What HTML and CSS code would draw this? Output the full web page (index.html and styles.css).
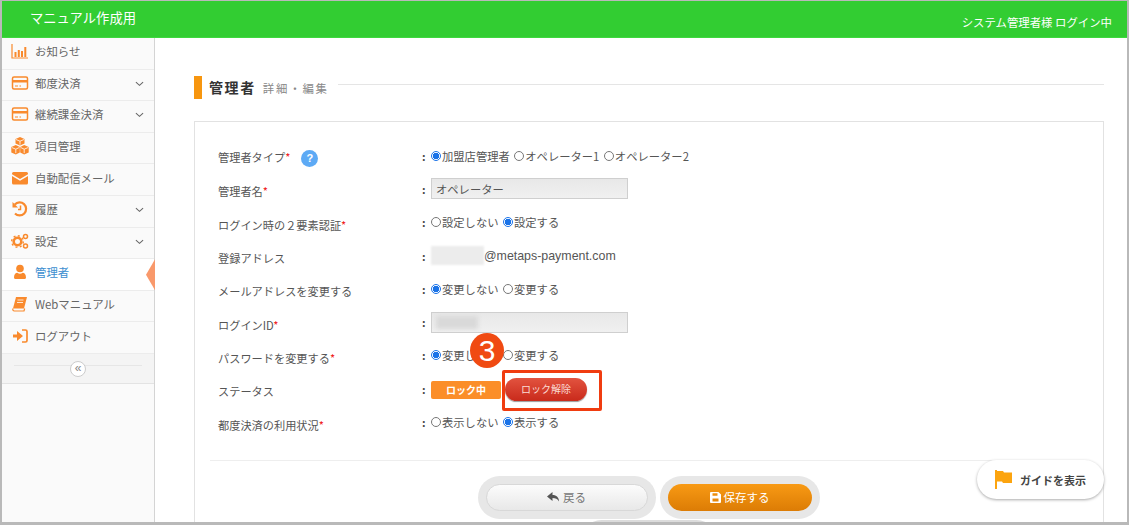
FILE: index.html
```html
<!DOCTYPE html>
<html lang="ja">
<head>
    <meta charset="UTF-8">
    <meta name="viewport" content="width=device-width, initial-scale=1.0">
    <title>管理者 詳細・編集</title>
    <link rel="stylesheet" href="styles.css">
</head>
<body>
<div class="frame">
    <header class="topbar">
        <div class="brand">マニュアル作成用</div>
        <div class="login-user">システム管理者様 ログイン中</div>
    </header>
    <div class="wrap">
        <nav class="sidebar">
            <a class="nav-item">
                <svg class="nav-icon" viewBox="0 0 18 18"><path d="M1 2v14h16" fill="none" stroke="#f98a2d" stroke-width="1.2"/><path d="M3.500 10h2v5h-2zM6.800 8h2v7h-2zM10 9h2v6h-2zM13.300 5h2v10h-2z" fill="#f98a2d"/></svg>
                <span>お知らせ</span>
            </a>
            <a class="nav-item">
                <svg class="nav-icon" viewBox="0 0 18 18"><rect x="1.500" y="3" width="15" height="12" rx="1.500" fill="none" stroke="#f98a2d" stroke-width="1.500"/><path d="M1.500 6h15v2.500h-15z" fill="#f98a2d"/><path d="M4 12h3M8.500 12h1.500" stroke="#f98a2d"/></svg>
                <span>都度決済</span>
                <svg class="chev" viewBox="0 0 10 6"><path d="M1 1l4 3.500L9 1" fill="none" stroke="#666" stroke-width="1.200"/></svg>
            </a>
            <a class="nav-item">
                <svg class="nav-icon" viewBox="0 0 18 18"><rect x="1.500" y="3" width="15" height="12" rx="1.500" fill="none" stroke="#f98a2d" stroke-width="1.500"/><path d="M1.500 6h15v2.500h-15z" fill="#f98a2d"/><path d="M4 12h3M8.500 12h1.500" stroke="#f98a2d"/></svg>
                <span>継続課金決済</span>
                <svg class="chev" viewBox="0 0 10 6"><path d="M1 1l4 3.500L9 1" fill="none" stroke="#666" stroke-width="1.200"/></svg>
            </a>
            <a class="nav-item">
                <svg class="nav-icon" viewBox="0 0 18 18"><path d="M9 0l4.500 2v4.500L9 8.500 4.500 6.500V2zM4.800 8l4 2v5.500L4.800 17.500 .3 15.500V10zM13.200 8l4.500 2v5.500l-4.500 2-4-2V10z" fill="#f98a2d"/><path d="M5 2.500L9 4.200l4-1.700M.8 10.500l4 1.700 3.500-1.700M9.700 10.500l3.500 1.700 4-1.700M9 4.200v3.500M4.800 12.200v4M13.200 12.200v4" fill="none" stroke="#fff" stroke-width=".8"/></svg>
                <span>項目管理</span>
            </a>
            <a class="nav-item">
                <svg class="nav-icon" viewBox="0 0 18 18"><path d="M2.500 3h13A1.500 1.500 0 0 1 17 4.500v.7L9 10 1 5.200v-.7A1.500 1.500 0 0 1 2.500 3zM1 7l8 4.800L17 7v7a1.500 1.500 0 0 1-1.500 1.500h-13A1.500 1.500 0 0 1 1 14z" fill="#f98a2d"/></svg>
                <span>自動配信メール</span>
            </a>
            <a class="nav-item">
                <svg class="nav-icon" viewBox="0 0 18 18"><path d="M3.800 4.500A6.500 6.500 0 1 1 4 13.500" fill="none" stroke="#f98a2d" stroke-width="2.200"/><path d="M1.500 2v5.500H7z" fill="#f98a2d"/><path d="M9.500 5.500v4H7" fill="none" stroke="#f98a2d" stroke-width="1.500"/></svg>
                <span>履歴</span>
                <svg class="chev" viewBox="0 0 10 6"><path d="M1 1l4 3.500L9 1" fill="none" stroke="#666" stroke-width="1.200"/></svg>
            </a>
            <a class="nav-item">
                <svg class="nav-icon" viewBox="0 0 18 18"><circle cx="6.500" cy="9.500" r="3.800" fill="none" stroke="#f98a2d" stroke-width="2.600"/><circle cx="6.500" cy="9.500" r="5.800" fill="none" stroke="#f98a2d" stroke-width="1.400" stroke-dasharray="2 2.500"/><circle cx="14.500" cy="4.500" r="2" fill="none" stroke="#f98a2d" stroke-width="1.500"/><circle cx="14.500" cy="14" r="2" fill="none" stroke="#f98a2d" stroke-width="1.500"/></svg>
                <span>設定</span>
                <svg class="chev" viewBox="0 0 10 6"><path d="M1 1l4 3.500L9 1" fill="none" stroke="#666" stroke-width="1.200"/></svg>
            </a>
            <a class="nav-item active">
                <svg class="nav-icon" viewBox="0 0 18 18"><circle cx="9" cy="5.500" r="3.800" fill="#f98a2d"/><path d="M4 16a1.800 1.800 0 0 1-1-1.500C3 11.500 4.500 9.800 6.300 9.800c.9.700 1.800 1 2.700 1s1.800-.3 2.700-1c1.800 0 3.300 1.700 3.300 4.700a1.800 1.800 0 0 1-1 1.500z" fill="#f98a2d"/></svg>
                <span>管理者</span>
            </a>
            <a class="nav-item">
                <svg class="nav-icon" viewBox="0 0 18 18"><path d="M5 2h11l-3 11.500H2z" fill="#f98a2d"/><path d="M2 13.500c-.6 1.500 0 2.500 1.500 2.500H13l.7-2.500" fill="none" stroke="#f98a2d" stroke-width="1.200"/><path d="M6.500 5h6M6 7.500h6" stroke="#fff" stroke-width=".8"/></svg>
                <span>Webマニュアル</span>
            </a>
            <a class="nav-item">
                <svg class="nav-icon" viewBox="0 0 18 18"><path d="M2 7.500h4V4l6 5-6 5v-3.500H2z" fill="#f98a2d"/><path d="M11 3h3.500A1.500 1.500 0 0 1 16 4.500v9a1.500 1.500 0 0 1-1.500 1.500H11" fill="none" stroke="#f98a2d" stroke-width="1.700"/></svg>
                <span>ログアウト</span>
            </a>
            <div class="collapse">
                <span class="collapse-btn">«</span>
            </div>
        </nav>
        <main class="content">
            <div class="page-title">
                <h1>管理者</h1>
                <span class="sub">詳細・編集</span>
                <span class="title-line"></span>
            </div>
            <section class="card">
                <div class="row">
                    <div class="label">管理者タイプ<em>*</em><span class="help">?</span></div>
                    <div class="colon">:</div>
                    <div class="value">
                        <span class="radio on"></span><span class="opt">加盟店管理者</span>
                        <span class="radio"></span><span class="opt">オペレーター1</span>
                        <span class="radio"></span><span class="opt">オペレーター2</span>
                    </div>
                </div>
                <div class="row">
                    <div class="label">管理者名<em>*</em></div>
                    <div class="colon">:</div>
                    <div class="value"><div class="input">オペレーター</div></div>
                </div>
                <div class="row">
                    <div class="label">ログイン時の２要素認証<em>*</em></div>
                    <div class="colon">:</div>
                    <div class="value">
                        <span class="radio"></span><span class="opt">設定しない</span>
                        <span class="radio on"></span><span class="opt">設定する</span>
                    </div>
                </div>
                <div class="row">
                    <div class="label">登録アドレス</div>
                    <div class="colon">:</div>
                    <div class="value"><span class="blur-mail"></span><span class="mail">@metaps-payment.com</span></div>
                </div>
                <div class="row">
                    <div class="label">メールアドレスを変更する</div>
                    <div class="colon">:</div>
                    <div class="value">
                        <span class="radio on"></span><span class="opt">変更しない</span>
                        <span class="radio"></span><span class="opt">変更する</span>
                    </div>
                </div>
                <div class="row">
                    <div class="label">ログインID<em>*</em></div>
                    <div class="colon">:</div>
                    <div class="value"><div class="input"><span class="blur-id"></span></div></div>
                </div>
                <div class="row">
                    <div class="label">パスワードを変更する<em>*</em></div>
                    <div class="colon">:</div>
                    <div class="value">
                        <span class="radio on"></span><span class="opt">変更しない</span>
                        <span class="radio"></span><span class="opt">変更する</span>
                    </div>
                </div>
                <div class="row">
                    <div class="label">ステータス</div>
                    <div class="colon">:</div>
                    <div class="value status">
                        <span class="locked">ロック中</span>
                        <span class="unlock">ロック解除</span>
                    </div>
                </div>
                <div class="row">
                    <div class="label">都度決済の利用状況<em>*</em></div>
                    <div class="colon">:</div>
                    <div class="value">
                        <span class="radio"></span><span class="opt">表示しない</span>
                        <span class="radio on"></span><span class="opt">表示する</span>
                    </div>
                </div>
                <hr class="divider">
                <div class="actions">
                    <div class="btn-ring"><div class="btn btn-back">
                        <svg width="13" height="11" viewBox="0 0 13 11"><path d="M5.500 0L0 4.500 5.500 9V6c3 0 5 .8 6.500 3.500C12 5.500 9.500 3 5.500 3z" fill="#555"/></svg>
                        戻る
                    </div></div>
                    <div class="btn-ring save"><div class="btn btn-save">
                        <svg width="11" height="11" viewBox="0 0 11 11"><path d="M1 0h7.500L11 2.500V10a1 1 0 0 1-1 1H1a1 1 0 0 1-1-1V1a1 1 0 0 1 1-1zm1.500 1.300v2.500h5V1.300zM2.500 6.500v3h6v-3z" fill="#fff" fill-rule="evenodd"/></svg>
                        保存する
                    </div></div>
                </div>
                <div class="btn-ring next"></div>
            </section>
        </main>
    </div>

    <div class="guide">
        <svg width="17" height="19" viewBox="0 0 17 19"><path d="M0 0h2v19H0zM2 1h6l1 1.500h8V13H8l-1-1.500H2z" fill="#fca40f"/></svg>
        ガイドを表示
    </div>
    <div class="step-mark">3</div>
    <div class="step-box"></div>
</div>
</body>
</html>
```

FILE: styles.css
```css
* {
    box-sizing: border-box;
}
html, body {
    margin: 0;
    height: 100%;
    overflow: hidden;
}
body {
    font-family: "Noto Sans CJK JP", "Liberation Sans", sans-serif;
    font-size: 12px;
    color: #555;
    background: #fff;
}
.frame {
    position: relative;
    width: 1129px;
    height: 525px;
    border: 2px solid #b9b9b9;
    border-bottom-width: 3px;
    border-top-width: 1px;
    overflow: hidden;
}
.topbar {
    height: 37px;
    background: #32cd32;
    color: #fff;
    display: flex;
    align-items: center;
    justify-content: space-between;
    border-bottom: 1px solid #3ed83e;
}
.brand {
    padding-left: 28px;
    font-size: 13.300px;
    margin-top: -3px;
}
.login-user {
    padding-right: 15px;
    font-size: 11.400px;
    margin-top: 6px;
}
.wrap {
    display: flex;
    height: 485px;
}
.sidebar {
    width: 153px;
    flex: none;
    background: #fafafa;
    border-right: 1px solid #d4d4d4;
}
.nav-item {
    position: relative;
    height: 31.600px;
    display: flex;
    align-items: center;
    padding-left: 9px;
    padding-bottom: 4px;
    border-bottom: 1px solid #ececec;
    font-size: 11.400px;
    color: #666;
}
.nav-icon {
    width: 18px;
    height: 18px;
    margin-right: 6px;
    flex: none;
}
.chev {
    position: absolute;
    right: 10px;
    top: 11px;
    width: 9px;
    height: 6px;
}
.nav-item.active {
    background: #fff;
    color: #3b8ed0;
}
.nav-item.active::after {
    content: "";
    position: absolute;
    right: -1px;
    top: 0;
    height: 31px;
    width: 9px;
    background: #f9996b;
    clip-path: polygon(100% 0, 100% 100%, 0 50%);
}
.collapse {
    position: relative;
    height: 30px;
    background: #f4f4f4;
    border-bottom: 1px solid #e3e3e3;
}
.collapse::before {
    content: "";
    position: absolute;
    left: 12px;
    right: 12px;
    top: 11px;
    border-top: 1px solid #e6e6e6;
}
.collapse-btn {
    position: absolute;
    left: 68px;
    top: 7px;
    width: 16px;
    height: 16px;
    border: 1px solid #ccc;
    border-radius: 50%;
    background: #fff;
    color: #888;
    font-size: 12px;
    line-height: 12px;
    text-align: center;
    font-family: "Liberation Sans", sans-serif;
}
.content {
    flex: 1;
    padding: 38px 23px 0 39px;
    min-width: 0;
}
.page-title {
    display: flex;
    align-items: center;
    height: 23px;
    margin-bottom: 22px;
}
.page-title::before {
    content: "";
    width: 8px;
    height: 23px;
    background: #f7960f;
    margin-right: 7px;
}
.page-title h1 {
    margin: -2px 0 0;
    font-size: 14px;
    font-weight: 700;
    color: #333;
    letter-spacing: 1.600px;
}
.sub {
    margin-left: 7px;
    font-size: 11.400px;
    color: #888;
    letter-spacing: 1.800px;
}
.title-line {
    flex: 1;
    border-top: 1px solid #e5e5e5;
    margin: -6px 0 0 9px;
}
.card {
    border: 1px solid #e2e2e2;
    height: 420px;
    padding: 18px 15px 0 23px;
}
.row {
    display: flex;
    align-items: center;
    height: 33.300px;
}
.label {
    width: 204px;
    font-size: 11.200px;
    color: #555;
    padding-top: 3px;
}
.label em {
    color: #f02020;
    font-style: normal;
}
.help {
    display: inline-block;
    width: 17px;
    height: 17px;
    margin-left: 11px;
    border-radius: 50%;
    background: #5daaf5;
    color: #fff;
    font-size: 11px;
    font-weight: 700;
    line-height: 17px;
    text-align: center;
    font-family: "Liberation Sans", sans-serif;
}
.colon {
    width: 9px;
    font-weight: 700;
    color: #444;
    font-size: 11px;
    margin-top: -2px;
}
.value {
    display: flex;
    align-items: center;
    font-size: 11.300px;
    color: #555;
    margin-top: -2px;
}
.radio {
    width: 10px;
    height: 10px;
    margin: 0 1px 0 0;
    border: 1px solid #777;
    border-radius: 50%;
    background: #fff;
    flex: none;
}
.radio.on {
    border-color: #1a73e8;
    background: radial-gradient(circle, #1a73e8 0 3px, #fff 3.500px);
}
.opt {
    margin-right: 4.500px;
}
.input {
    width: 197px;
    height: 21px;
    padding: 0 4px;
    display: flex;
    align-items: center;
    background: linear-gradient(#e8e8e8, #f0f0f0);
    border: 1px solid #cfcfcf;
    font-size: 11.300px;
}
.blur-id {
    display: block;
    width: 42px;
    height: 13px;
    background: #d9d9d9;
    filter: blur(2px);
}
.blur-mail {
    width: 53px;
    height: 19px;
    background: #ececec;
    filter: blur(1px);
}
.mail {
    font-family: "Liberation Sans", sans-serif;
    font-size: 12.400px;
    padding-top: 1px;
}
.status {
    gap: 4px;
    margin-top: 0;
}
.locked {
    width: 70px;
    height: 18px;
    background: #fb8e29;
    border-radius: 2px;
    color: #fff;
    font-size: 10px;
    font-weight: 700;
    line-height: 17px;
    text-align: center;
}
.unlock {
    width: 82px;
    height: 23px;
    border-radius: 12px;
    background: linear-gradient(#e2533f, #c92a1b);
    color: #fbdcd5;
    font-size: 10px;
    line-height: 22px;
    text-align: center;
    box-shadow: 0 1px 1px #999;
}
.divider {
    border: 0;
    border-top: 1px solid #eee;
    margin: 20px 0 15px -8px;
}
.actions {
    display: flex;
    justify-content: center;
    gap: 4px;
    margin-left: -9px;
}
.btn-ring {
    width: 178px;
    height: 43px;
    padding: 8px;
    border-radius: 22px;
    background: #e7e7e7;
}
.btn-ring.save {
    width: 160px;
}
.btn-ring.next {
    width: 138px;
    margin: 1px 0 0 362px;
    background: #dcdcdc;
}
.btn {
    height: 27px;
    border-radius: 14px;
    display: flex;
    align-items: center;
    justify-content: center;
    gap: 3px;
    font-size: 11.500px;
}
.btn-back {
    background: linear-gradient(#fcfcfc, #e8e8e8);
    border: 1px solid #d8d8d8;
    color: #777;
}
.btn-save {
    background: linear-gradient(#f89a14, #dc7c05);
    color: #fff;
}
.guide {
    position: absolute;
    left: 975px;
    top: 459px;
    width: 127px;
    height: 39px;
    padding-left: 18px;
    display: flex;
    align-items: center;
    gap: 8px;
    border-radius: 20px;
    background: #fff;
    box-shadow: 0 1px 3px #aaa;
    font-size: 11px;
    font-weight: 700;
    color: #444;
}
.step-mark {
    position: absolute;
    left: 468px;
    top: 332px;
    width: 34px;
    height: 35px;
    border-radius: 50%;
    background: #f04a12;
    color: #fff;
    font-family: "Liberation Sans", sans-serif;
    font-size: 30px;
    line-height: 35px;
    text-align: center;
}
.step-box {
    position: absolute;
    left: 500px;
    top: 369px;
    width: 100px;
    height: 41px;
    border: 3px solid #f03c10;
    border-radius: 2px;
}
```
